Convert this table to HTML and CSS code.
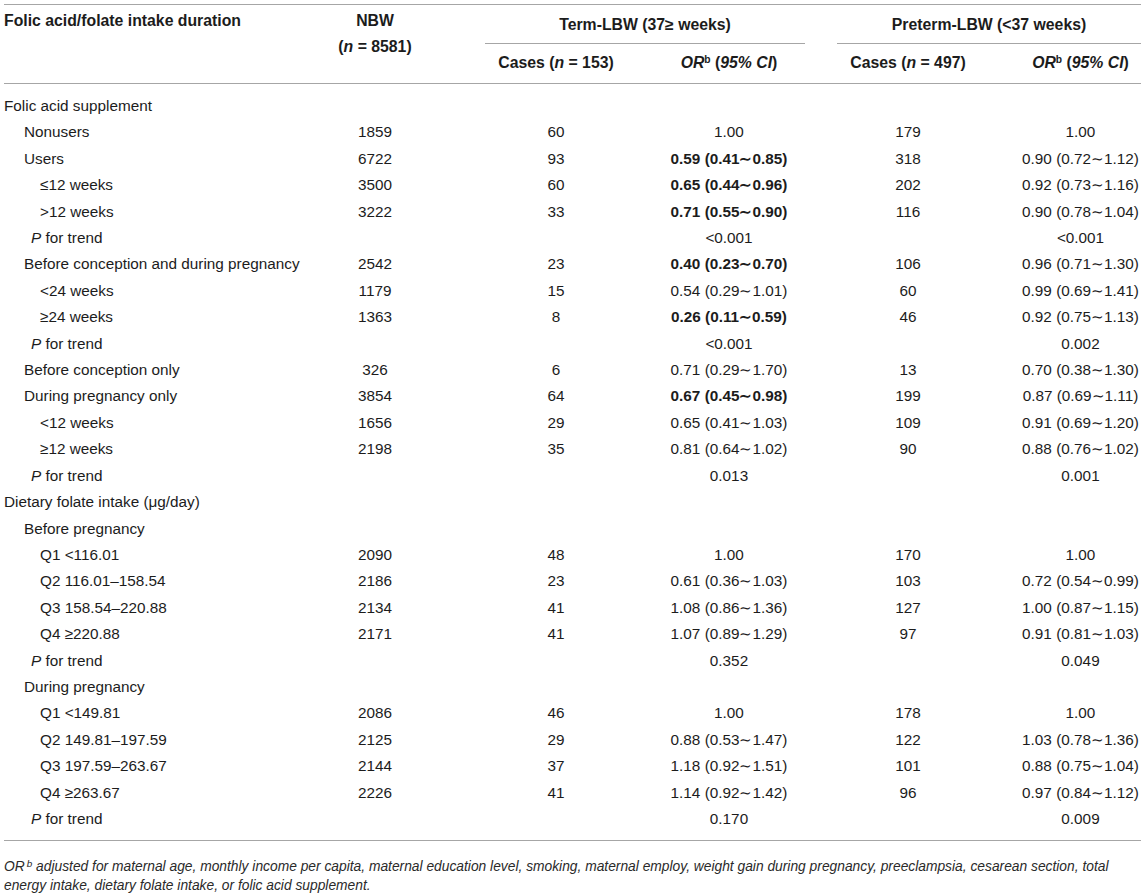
FILE: index.html
```html
<!DOCTYPE html>
<html lang="en">
<head>
<meta charset="utf-8">
<title>Folic acid/folate intake and LBW</title>
<link rel="stylesheet" href="styles.css">
</head>
<body>
<table class="tbl">
  <colgroup>
    <col class="w-label">
    <col class="w-nbw">
    <col class="w-cases1">
    <col class="w-or1">
    <col class="w-cases2">
    <col class="w-or2">
  </colgroup>
  <thead>
    <tr class="hrow1">
      <th rowspan="2" class="hlabel">Folic acid/folate intake duration</th>
      <th rowspan="2" class="hnbw">NBW<br>(<i>n</i> = 8581)</th>
      <th colspan="2" class="hgrp"><div class="grp grp-term">Term-LBW (37≥ weeks)</div></th>
      <th colspan="2" class="hgrp"><div class="grp grp-pre">Preterm-LBW (&lt;37 weeks)</div></th>
    </tr>
    <tr class="hrow2">
      <th class="hsub">Cases (<i>n</i> = 153)</th>
      <th class="hsub"><i>OR</i><sup>b</sup> (<i>95% CI</i>)</th>
      <th class="hsub">Cases (<i>n</i> = 497)</th>
      <th class="hsub"><i>OR</i><sup>b</sup> (<i>95% CI</i>)</th>
    </tr>
  </thead>
  <tbody>
    <tr class="first"><td class="l0">Folic acid supplement</td><td></td><td></td><td></td><td></td><td></td></tr>
    <tr><td class="l1">Nonusers</td><td>1859</td><td>60</td><td>1.00</td><td>179</td><td>1.00</td></tr>
    <tr><td class="l1">Users</td><td>6722</td><td>93</td><td><b>0.59 (0.41∼0.85)</b></td><td>318</td><td>0.90 (0.72∼1.12)</td></tr>
    <tr><td class="l2">≤12 weeks</td><td>3500</td><td>60</td><td><b>0.65 (0.44∼0.96)</b></td><td>202</td><td>0.92 (0.73∼1.16)</td></tr>
    <tr><td class="l2">&gt;12 weeks</td><td>3222</td><td>33</td><td><b>0.71 (0.55∼0.90)</b></td><td>116</td><td>0.90 (0.78∼1.04)</td></tr>
    <tr><td class="lp"><i>P</i> for trend</td><td></td><td></td><td>&lt;0.001</td><td></td><td>&lt;0.001</td></tr>
    <tr><td class="l1">Before conception and during pregnancy</td><td>2542</td><td>23</td><td><b>0.40 (0.23∼0.70)</b></td><td>106</td><td>0.96 (0.71∼1.30)</td></tr>
    <tr><td class="l2">&lt;24 weeks</td><td>1179</td><td>15</td><td>0.54 (0.29∼1.01)</td><td>60</td><td>0.99 (0.69∼1.41)</td></tr>
    <tr><td class="l2">≥24 weeks</td><td>1363</td><td>8</td><td><b>0.26 (0.11∼0.59)</b></td><td>46</td><td>0.92 (0.75∼1.13)</td></tr>
    <tr><td class="lp"><i>P</i> for trend</td><td></td><td></td><td>&lt;0.001</td><td></td><td>0.002</td></tr>
    <tr><td class="l1">Before conception only</td><td>326</td><td>6</td><td>0.71 (0.29∼1.70)</td><td>13</td><td>0.70 (0.38∼1.30)</td></tr>
    <tr><td class="l1">During pregnancy only</td><td>3854</td><td>64</td><td><b>0.67 (0.45∼0.98)</b></td><td>199</td><td>0.87 (0.69∼1.11)</td></tr>
    <tr><td class="l2">&lt;12 weeks</td><td>1656</td><td>29</td><td>0.65 (0.41∼1.03)</td><td>109</td><td>0.91 (0.69∼1.20)</td></tr>
    <tr><td class="l2">≥12 weeks</td><td>2198</td><td>35</td><td>0.81 (0.64∼1.02)</td><td>90</td><td>0.88 (0.76∼1.02)</td></tr>
    <tr><td class="lp"><i>P</i> for trend</td><td></td><td></td><td>0.013</td><td></td><td>0.001</td></tr>
    <tr><td class="l0">Dietary folate intake (μg/day)</td><td></td><td></td><td></td><td></td><td></td></tr>
    <tr><td class="l1">Before pregnancy</td><td></td><td></td><td></td><td></td><td></td></tr>
    <tr><td class="l2">Q1 &lt;116.01</td><td>2090</td><td>48</td><td>1.00</td><td>170</td><td>1.00</td></tr>
    <tr><td class="l2">Q2 116.01–158.54</td><td>2186</td><td>23</td><td>0.61 (0.36∼1.03)</td><td>103</td><td>0.72 (0.54∼0.99)</td></tr>
    <tr><td class="l2">Q3 158.54–220.88</td><td>2134</td><td>41</td><td>1.08 (0.86∼1.36)</td><td>127</td><td>1.00 (0.87∼1.15)</td></tr>
    <tr><td class="l2">Q4 ≥220.88</td><td>2171</td><td>41</td><td>1.07 (0.89∼1.29)</td><td>97</td><td>0.91 (0.81∼1.03)</td></tr>
    <tr><td class="lp"><i>P</i> for trend</td><td></td><td></td><td>0.352</td><td></td><td>0.049</td></tr>
    <tr><td class="l1">During pregnancy</td><td></td><td></td><td></td><td></td><td></td></tr>
    <tr><td class="l2">Q1 &lt;149.81</td><td>2086</td><td>46</td><td>1.00</td><td>178</td><td>1.00</td></tr>
    <tr><td class="l2">Q2 149.81–197.59</td><td>2125</td><td>29</td><td>0.88 (0.53∼1.47)</td><td>122</td><td>1.03 (0.78∼1.36)</td></tr>
    <tr><td class="l2">Q3 197.59–263.67</td><td>2144</td><td>37</td><td>1.18 (0.92∼1.51)</td><td>101</td><td>0.88 (0.75∼1.04)</td></tr>
    <tr><td class="l2">Q4 ≥263.67</td><td>2226</td><td>41</td><td>1.14 (0.92∼1.42)</td><td>96</td><td>0.97 (0.84∼1.12)</td></tr>
    <tr class="last"><td class="lp"><i>P</i> for trend</td><td></td><td></td><td>0.170</td><td></td><td>0.009</td></tr>
  </tbody>
</table>
<p class="note"><i>OR</i><sup>b</sup> adjusted for maternal age, monthly income per capita, maternal education level, smoking, maternal employ, weight gain during pregnancy, preeclampsia, cesarean section, total energy intake, dietary folate intake, or folic acid supplement.</p>
</body>
</html>
```

FILE: styles.css
```css
html, body {
  margin: 0;
  padding: 0;
  background: #ffffff;
}

body {
  padding: 4px 4px 0 4px;
  font-family: "Liberation Sans", Arial, Helvetica, sans-serif;
  font-size: 15.3px;
  color: #1c1c1c;
}

.tbl {
  width: 1137px;
  border-collapse: collapse;
  table-layout: fixed;
  border-top: 1px solid #a6a6a6;
  border-bottom: 1px solid #a6a6a6;
}

.w-label { width: 296px; }
.w-nbw { width: 150px; }
.w-cases1 { width: 212px; }
.w-or1 { width: 134px; }
.w-cases2 { width: 224px; }
.w-or2 { width: 121px; }

th {
  font-weight: bold;
  font-size: 15.8px;
  text-align: center;
  padding: 0;
  white-space: nowrap;
}

th sup {
  font-size: 0.65em;
  line-height: 0;
  vertical-align: 0.45em;
}

.hrow2 th {
  border-bottom: 1px solid #a6a6a6;
}

.hlabel {
  text-align: left;
  vertical-align: top;
  padding-top: 3px;
  line-height: 26px;
  border-bottom: 1px solid #a6a6a6;
}

.hnbw {
  vertical-align: top;
  padding-top: 3px;
  line-height: 26px;
  border-bottom: 1px solid #a6a6a6;
}

.hgrp {
  vertical-align: top;
  padding-top: 10px;
}

.grp {
  line-height: 20px;
  padding-bottom: 8px;
  border-bottom: 1px solid #a6a6a6;
}

.grp-term {
  margin: 0 -9px 0 35px;
}

.grp-pre {
  margin: 0 0 0 41px;
}

.hsub {
  line-height: 20px;
  padding: 9px 0 10px 0;
}

td {
  padding: 0;
  line-height: 26.4px;
  text-align: center;
  white-space: nowrap;
}

td.l0, td.l1, td.l2, td.lp {
  text-align: left;
}

.l0 { padding-left: 0; }
.l1 { padding-left: 20px; }
.l2 { padding-left: 36px; }
.lp { padding-left: 27px; }

tr.first td {
  padding-top: 9px;
}

tr.last td {
  padding-bottom: 8px;
}

.note {
  margin: 16px 0 0 0;
  width: 1137px;
  font-size: 13.8px;
  line-height: 19px;
  font-style: italic;
  color: #2a2a2a;
}

.note sup {
  font-size: 0.72em;
  line-height: 0;
  vertical-align: 0.4em;
  padding-left: 2px;
}
```
